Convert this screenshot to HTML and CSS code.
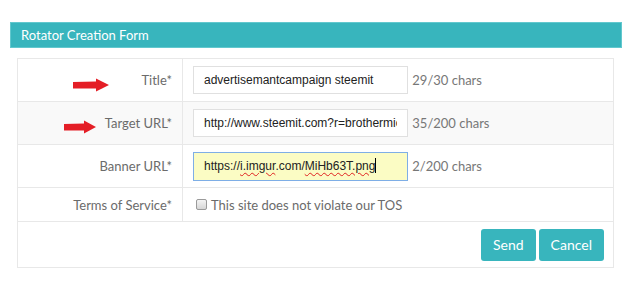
FILE: index.html
```html
<!DOCTYPE html>
<html lang="en">
<head>
    <meta charset="UTF-8">
    <meta name="viewport" content="width=device-width, initial-scale=1.0">
    <title>Rotator Creation Form</title>
    <link rel="stylesheet" href="styles.css">
</head>
<body>
    <div class="panel">
        <div class="panel-heading">Rotator Creation Form</div>
        <div class="panel-body">
            <form id="rotatorForm">
                <table class="form-table">
                    <tr>
                        <th>
                            <svg class="arrow arrow-title" width="38" height="14" viewBox="0 0 38 14">
                                <path d="M1 4 L24 3.5 L24 0.5 L37 7 L24 13.5 L24 10.5 L1 10.5 Z" fill="#e41e26"/>
                            </svg>
                            Title*
                        </th>
                        <td>
                            <input class="field" type="text" value="advertisemantcampaign steemit">
                            <span class="count">29/30 chars</span>
                        </td>
                    </tr>
                    <tr class="alt">
                        <th>
                            <svg class="arrow arrow-url" width="34" height="14" viewBox="0 0 34 14">
                                <path d="M1 4 L21 3.5 L21 0.5 L33 7 L21 13.5 L21 10.5 L1 10.5 Z" fill="#e41e26"/>
                            </svg>
                            Target URL*
                        </th>
                        <td>
                            <input class="field" type="text" value="http://www.steemit.com?r=brothermick">
                            <span class="count">35/200 chars</span>
                        </td>
                    </tr>
                    <tr>
                        <th>Banner URL*</th>
                        <td>
                            <div class="field focus">https://<span class="typo">i.imgur</span>.com/<span class="typo">MiHb63T.png</span><span class="caret"></span></div>
                            <span class="count">2/200 chars</span>
                        </td>
                    </tr>
                    <tr class="short">
                        <th>Terms of Service*</th>
                        <td>
                            <label class="check"><input type="checkbox"> This site does not violate our TOS</label>
                        </td>
                    </tr>
                    <tr class="actions">
                        <td colspan="2">
                            <div class="buttons">
                                <button type="submit">Send</button>
                                <button type="button">Cancel</button>
                            </div>
                        </td>
                    </tr>
                </table>
            </form>
        </div>
    </div>
</body>
</html>
```

FILE: styles.css
```css
body {
    margin: 22px 0 0 10px;
    font-family: Lato, "Open Sans", sans-serif;
    background: #fff;
    color: #6b6b6b;
}
.panel {
    width: 612px;
}
.panel-heading {
    background-color: #38b5bd;
    border: 1px solid #62c8ce;
    color: #fff;
    font-size: 13px;
    line-height: 16px;
    padding: 4px 10px;
}
.panel-body {
    padding: 10px 8px 0 7px;
}
.form-table {
    width: 597px;
    border-collapse: collapse;
    border: 1px solid #e2e2e2;
}
.form-table th,
.form-table td {
    border: 1px solid #e8e8e8;
    height: 42px;
    padding: 0;
    vertical-align: middle;
}
.form-table th {
    position: relative;
    width: 154px;
    padding-right: 10px;
    text-align: right;
    font-weight: normal;
    font-size: 13px;
    color: #6b6b6b;
}
.form-table td {
    padding-left: 10px;
    font-size: 13px;
}
.form-table tr.alt {
    background: #f9f9f9;
}
.form-table tr.short th,
.form-table tr.short td {
    height: 33px;
}
.arrow {
    position: absolute;
    top: 18px;
}
.arrow-title {
    left: 54px;
    top: 19px;
}
.arrow-url {
    left: 45px;
}
.field {
    display: inline-block;
    box-sizing: border-box;
    width: 215px;
    height: 28px;
    padding: 0 10px;
    border: 1px solid #e0e0e0;
    background: #fff;
    font-family: "Liberation Sans", Arial, sans-serif;
    font-size: 12px;
    line-height: 26px;
    color: #222;
    vertical-align: middle;
    white-space: nowrap;
    overflow: hidden;
}
.field.focus {
    background: #fbfcc4;
    border-color: #7eaee6;
    height: 29px;
    line-height: 27px;
}
.typo {
    text-decoration: underline wavy #e02020;
    text-decoration-thickness: 1px;
    text-underline-offset: 2px;
}
.caret {
    display: inline-block;
    width: 1px;
    height: 15px;
    background: #000;
    vertical-align: -3px;
}
.count {
    margin-left: 1px;
    color: #777;
    vertical-align: middle;
}
.check {
    display: flex;
    align-items: center;
    gap: 4px;
    padding-left: 3px;
    color: #6b6b6b;
}
.check input {
    appearance: none;
    width: 11px;
    height: 11px;
    margin: 0;
    border: 1px solid #9a9a9a;
    border-radius: 2px;
    background: linear-gradient(#f4f4f4, #d6d6d6);
}
.actions td {
    height: 45px;
    padding: 0 9px 0 0;
}
.buttons {
    display: flex;
    justify-content: flex-end;
    gap: 3px;
}
button {
    height: 32px;
    padding: 0 12px;
    background-color: #38b5bd;
    color: #fff;
    border: none;
    border-radius: 3px;
    font-family: Lato, sans-serif;
    font-size: 14px;
    cursor: pointer;
}
button:hover {
    background-color: #2fa3ab;
}
```
